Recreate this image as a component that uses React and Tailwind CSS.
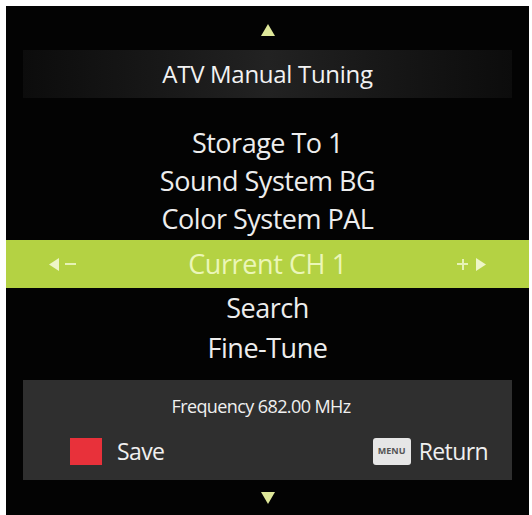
import { useState } from "react";

// channel tuning menu rows; the selected one gets the lime bar with -/+ arrows
const ROWS = [
  { id: "storage", label: "Storage To 1" },
  { id: "sound", label: "Sound System BG" },
  { id: "color", label: "Color System PAL" },
  { id: "channel", label: "Current CH 1", adjustable: true },
  { id: "search", label: "Search" },
  { id: "fine", label: "Fine-Tune" },
];

const FONT = { fontFamily: '"Open Sans", "Noto Sans", sans-serif' };

function Arrow({ dir }) {
  const points = dir === "up" ? "0,12 7,0 14,12" : "0,0 14,0 7,12";
  return (
    <svg width="14" height="12" viewBox="0 0 14 12">
      <polygon points={points} fill="#dfe89a" />
    </svg>
  );
}

function SideArrow({ dir }) {
  const points = dir === "left" ? "0,6.5 10,0 10,13" : "0,0 10,6.5 0,13";
  return (
    <svg width="10" height="13" viewBox="0 0 10 13">
      <polygon points={points} fill="#eef6c8" />
    </svg>
  );
}

function MenuRow({ row, active, below }) {
  if (active) {
    return (
      <div className="mt-[2px] flex h-[48px] items-center justify-between bg-[#b4d243] px-[43px]">
        <div className="flex w-[60px] items-center gap-[6px]">
          <SideArrow dir="left" />
          <span className="h-[2px] w-[11px] bg-[#e6f2b6]" />
        </div>
        <span className="text-[27px] tracking-[-0.4px] text-[#ebf6b8]">{row.label}</span>
        <div className="flex w-[60px] items-center justify-end gap-[8px]">
          <span className="relative h-[11px] w-[11px]">
            <span className="absolute left-0 top-[4.5px] h-[2px] w-[11px] bg-[#e6f2b6]" />
            <span className="absolute left-[4.5px] top-0 h-[11px] w-[2px] bg-[#e6f2b6]" />
          </span>
          <SideArrow dir="right" />
        </div>
      </div>
    );
  }
  return (
    <div
      className={`flex items-center justify-center text-[27px] tracking-[-0.5px] text-[#ededed] ${
        below ? "h-[40px]" : "h-[38px]"
      }`}
    >
      {row.label}
    </div>
  );
}

export default function App() {
  const [selected] = useState("channel");
  const selectedIndex = ROWS.findIndex((r) => r.id === selected);

  return (
    <div className="h-[515px] w-[532px] bg-white pl-[6px] pr-[3px] pt-[6px]" style={FONT}>
      <div className="flex h-full flex-col bg-[#030303]">
        <div className="flex h-[44px] items-center justify-center pt-[4px]">
          <Arrow dir="up" />
        </div>

        <div className="mx-[17px] flex h-[48px] items-center justify-center bg-gradient-to-r from-[#0c0c0c] via-[#222222] to-[#0c0c0c]">
          <span className="text-[24px] tracking-[-0.3px] text-[#f2f2f2]">ATV Manual Tuning</span>
        </div>

        <div className="flex flex-col pt-[26px]">
          {ROWS.map((row, i) => (
            <MenuRow key={row.id} row={row} active={i === selectedIndex} below={i > selectedIndex} />
          ))}
        </div>

        <div className="mx-[17px] mt-[12px] flex h-[100px] flex-col bg-[#2f2f2f] pl-[47px] pr-[24px]">
          <div className="flex h-[52px] items-center justify-center pr-[36px] text-[18px] tracking-[-0.6px] text-[#f0f0f0]">
            Frequency 682.00 MHz
          </div>
          <div className="flex h-[38px] items-center justify-between">
            <div className="flex items-center gap-[15px]">
              <span className="h-[27px] w-[32px] bg-[#e8313a]" />
              <span className="text-[23px] tracking-[-0.6px] text-[#f0f0f0]">Save</span>
            </div>
            <div className="flex items-center gap-[8px]">
              <span className="flex h-[27px] w-[38px] items-center justify-center rounded-[3px] bg-[#e6e6e6] text-[9px] font-bold text-[#555]">
                MENU
              </span>
              <span className="text-[23px] tracking-[-0.6px] text-[#f0f0f0]">Return</span>
            </div>
          </div>
        </div>

        <div className="flex flex-1 items-center justify-center">
          <Arrow dir="down" />
        </div>
      </div>
    </div>
  );
}
